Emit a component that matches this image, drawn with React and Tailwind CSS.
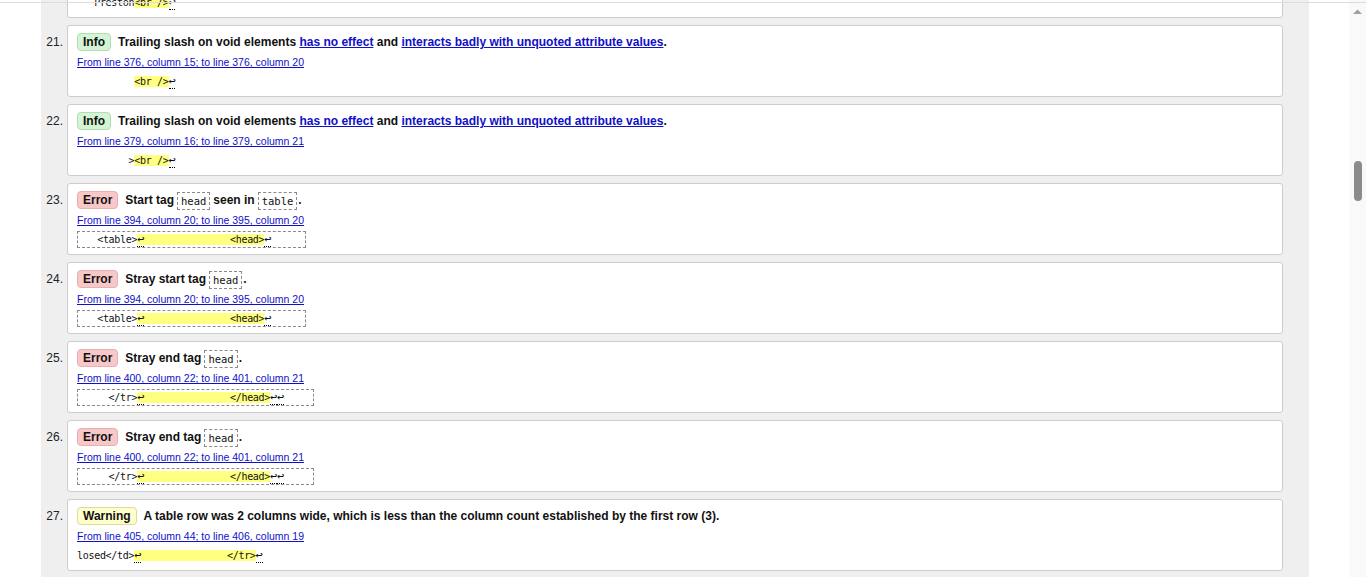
import React from "react";

const MONO = "font-['DejaVu_Sans_Mono','Liberation_Mono',monospace]";

function LF() {
  return <span className="border-b border-dotted border-black text-[12px] leading-none">↩</span>;
}

function HL({ children }) {
  return <span className="bg-[#ffff80]">{children}</span>;
}

function Badge({ type }) {
  const cls =
    type === "Info"
      ? "bg-[#d3f5d3] border-[#b3dcb3]"
      : type === "Error"
      ? "bg-[#f8c8c8] border-[#e6b0b0]"
      : "bg-[#ffffcc] border-[#deda9e]";
  return (
    <span
      className={`inline-flex items-center h-[18px] px-[5px] border rounded-[4px] font-bold text-[12px] leading-[16px] text-[#111] mr-[7px] ${cls}`}
    >
      {type}
    </span>
  );
}

function A({ children }) {
  return <span className="underline text-[#1010c8]">{children}</span>;
}

function C({ children, last }) {
  return (
    <code
      className={`${MONO} inline-block border border-dashed border-[#8a8a8a] px-[3px] h-[18px] leading-[16px] text-[10.5px] font-normal text-[#111] ml-[3px] ${last ? "mr-[1px]" : "mr-[3px]"} align-middle`}
    >
      {children}
    </code>
  );
}

function Card({ num, type, msg, loc, code, boxed, boxW }) {
  return (
    <li className="flex">
      <div className="w-[26px] shrink-0 pr-[4px] pt-[7px] h-[27px] text-right text-[12px] leading-[20px] text-[#222]">
        {num}.
      </div>
      <div className="w-[1216px] h-[72px] shrink-0 bg-white border border-[#cdcdcd] rounded-[3px] pl-[9px] pt-[6px] pb-[6px]">
        <div className="flex items-center h-[20px] whitespace-nowrap">
          <Badge type={type} />
          <span className="font-bold text-[12px] text-[#111] leading-[20px]">{msg}</span>
        </div>
        <div className="mt-[3px] h-[14px] leading-[14px] text-[10.5px] underline text-[#1010c8]">
          {loc}
        </div>
        <div className="mt-[3px] h-[18px] flex items-center">
          {boxed ? (
            <code
              className={`${MONO} whitespace-pre text-[10px] tracking-[-0.3px] text-[#111] border border-dashed border-[#8a8a8a] h-[17px] leading-[15px] px-[2px] ${boxW}`}
            >
              {code}
            </code>
          ) : (
            <code className={`${MONO} whitespace-pre text-[10px] tracking-[-0.3px] text-[#111] leading-[15px]`}>
              {code}
            </code>
          )}
        </div>
      </div>
    </li>
  );
}

const SP15 = "               ";

const items = [
  {
    num: 20,
    type: "Info",
    msg: <>Trailing slash on void elements <A>has no effect</A> and <A>interacts badly with unquoted attribute values</A>.</>,
    loc: "From line 372, column 20; to line 372, column 25",
    code: <>{"   Preston"}<HL>{"<br />"}</HL><LF /></>,
  },
  {
    num: 21,
    type: "Info",
    msg: <>Trailing slash on void elements <A>has no effect</A> and <A>interacts badly with unquoted attribute values</A>.</>,
    loc: "From line 376, column 15; to line 376, column 20",
    code: <>{"          "}<HL>{"<br />"}</HL><LF /></>,
  },
  {
    num: 22,
    type: "Info",
    msg: <>Trailing slash on void elements <A>has no effect</A> and <A>interacts badly with unquoted attribute values</A>.</>,
    loc: "From line 379, column 16; to line 379, column 21",
    code: <>{"         >"}<HL>{"<br />"}</HL><LF /></>,
  },
  {
    num: 23,
    type: "Error",
    msg: <>Start tag<C>head</C>seen in<C last>table</C>.</>,
    loc: "From line 394, column 20; to line 395, column 20",
    boxed: true,
    boxW: "w-[229px]",
    code: <>{"   <table>"}<HL><LF />{SP15 + "<head>"}</HL><LF /></>,
  },
  {
    num: 24,
    type: "Error",
    msg: <>Stray start tag<C last>head</C>.</>,
    loc: "From line 394, column 20; to line 395, column 20",
    boxed: true,
    boxW: "w-[229px]",
    code: <>{"   <table>"}<HL><LF />{SP15 + "<head>"}</HL><LF /></>,
  },
  {
    num: 25,
    type: "Error",
    msg: <>Stray end tag<C last>head</C>.</>,
    loc: "From line 400, column 22; to line 401, column 21",
    boxed: true,
    boxW: "w-[237px]",
    code: <>{"     </tr>"}<HL><LF />{SP15 + "</head>"}</HL><LF /><LF /></>,
  },
  {
    num: 26,
    type: "Error",
    msg: <>Stray end tag<C last>head</C>.</>,
    loc: "From line 400, column 22; to line 401, column 21",
    boxed: true,
    boxW: "w-[237px]",
    code: <>{"     </tr>"}<HL><LF />{SP15 + "</head>"}</HL><LF /><LF /></>,
  },
  {
    num: 27,
    type: "Warning",
    msg: <>A table row was 2 columns wide, which is less than the column count established by the first row (3).</>,
    loc: "From line 405, column 44; to line 406, column 19",
    code: <>{"losed</td>"}<HL><LF />{SP15 + "</tr>"}</HL><LF /></>,
  },
];

export default function App() {
  return (
    <div className="relative flex h-[577px] w-[1366px] overflow-hidden bg-white font-['Liberation_Sans',Arial,sans-serif]">
      <div className="flex flex-1 min-w-0">
        <div className="w-[41px] shrink-0" />
        <div className="w-[1268px] shrink-0 bg-[#efefef] pr-[26px]">
          <ol className="flex flex-col gap-[7px] mt-[-54px]">
            {items.map((it) => (
              <Card key={it.num} {...it} />
            ))}
          </ol>
        </div>
        <div className="flex-1" />
      </div>
      <div className="w-[17px] shrink-0 bg-[#f9f9f9] flex flex-col items-center">
        <svg width="9" height="6" viewBox="0 0 9 6" className="mt-[9px]">
          <path d="M0 5 L4.5 0.5 L9 5 Z" fill="#a0a0a0" />
        </svg>
        <div className="mt-[146px] w-[8px] h-[40px] rounded-full bg-[#8b8b8b]" />
      </div>
      <div className="absolute left-0 top-[2px] h-px w-full bg-[#dcdcdc]" />
    </div>
  );
}
